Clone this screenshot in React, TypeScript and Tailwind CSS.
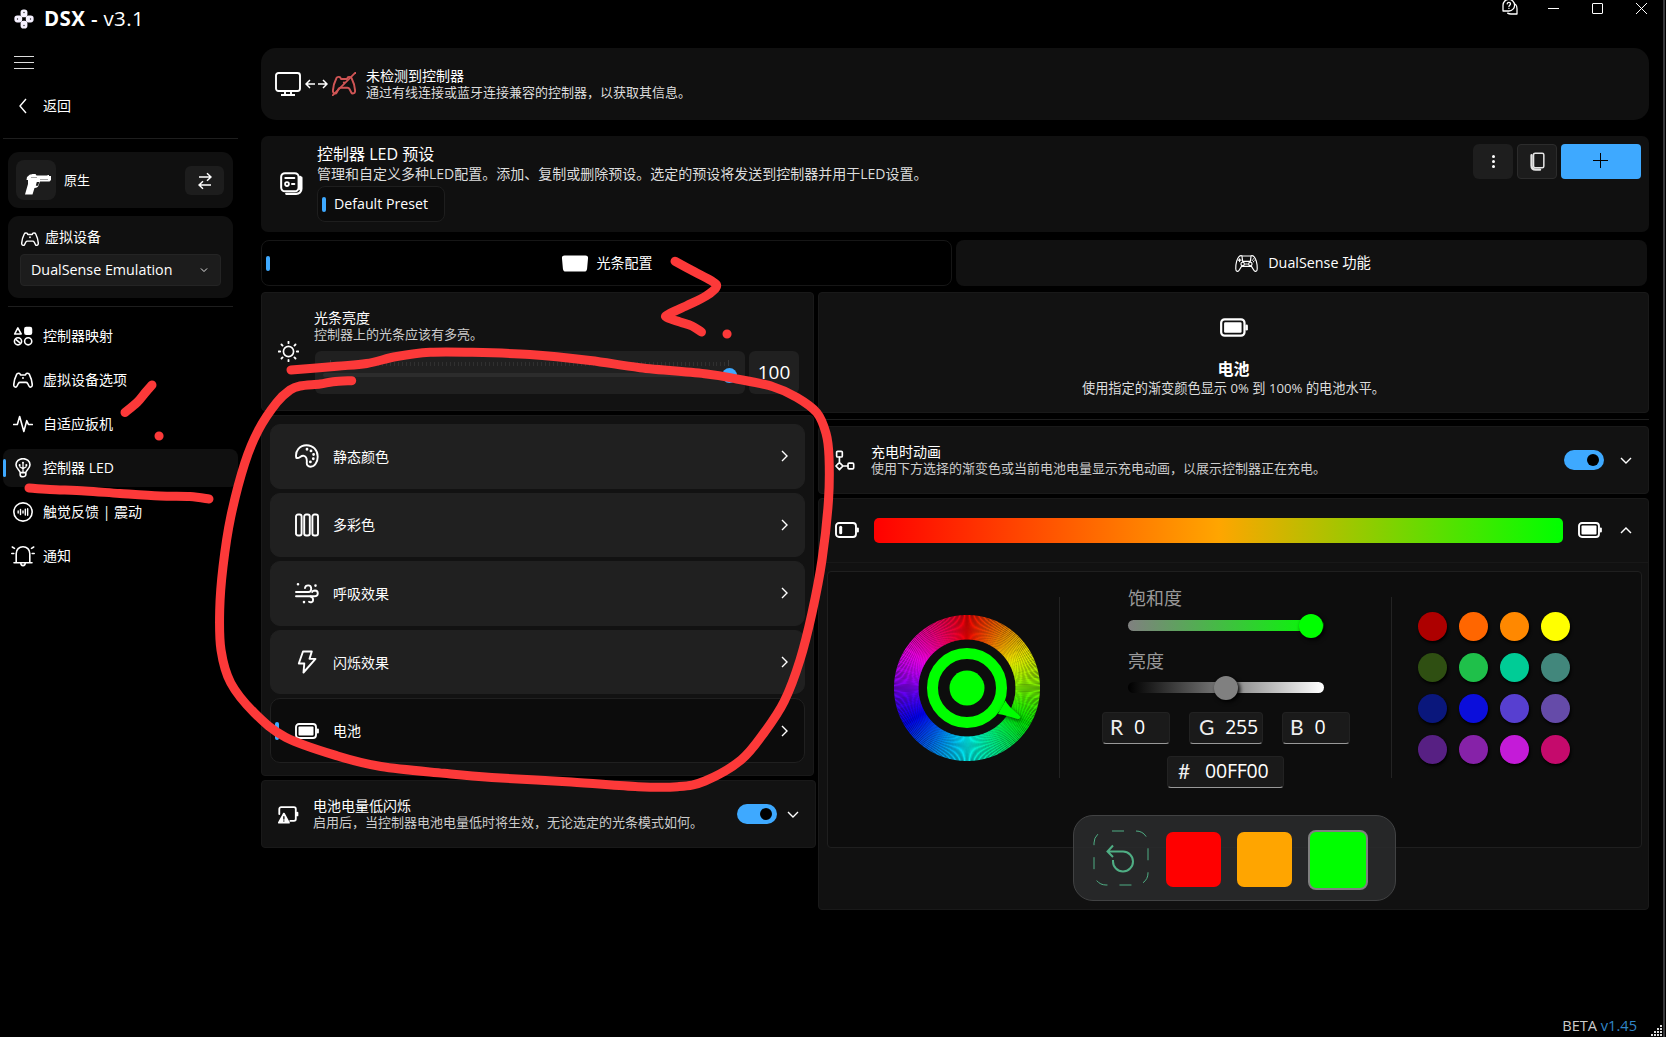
import React from "react";

const navItems = [
  { label: "控制器映射", icon: "mapping" },
  { label: "虚拟设备选项", icon: "pad" },
  { label: "自适应扳机", icon: "pulse" },
  { label: "控制器 LED", icon: "bulb", active: true },
  { label: "触觉反馈 | 震动", icon: "haptic" },
  { label: "通知", icon: "bell" },
];

const modes = [
  { label: "静态颜色", icon: "palette" },
  { label: "多彩色", icon: "bars" },
  { label: "呼吸效果", icon: "wind" },
  { label: "闪烁效果", icon: "bolt" },
  { label: "电池", icon: "battery", active: true },
];

const swatches = [
  "#ad0000", "#ff6600", "#ff8800", "#ffff00",
  "#2f4f12", "#1fc04a", "#00cc96", "#42877c",
  "#0a177c", "#0b0edb", "#573fd0", "#654ba9",
  "#572083", "#8622a8", "#c41bd8", "#c50a6c",
];

function Icon({ name, className }: { name: string; className?: string }) {
  const box = name === "battery" || name === "batteryLow" ? "0 0 24 16" : "0 0 24 24";
  return (
    <svg viewBox={box} className={className} fill="none" stroke="currentColor" strokeWidth="1.9" strokeLinecap="round" strokeLinejoin="round">
      {name === "mapping" && (
        <>
          <path d="M5.800 2.200 2 9.600h7.800z" />
          <rect x="13.300" y="1" width="9.800" height="9.800" rx="2.600" fill="currentColor" stroke="none" />
          <circle cx="6" cy="18.300" r="4.300" />
          <circle cx="18.200" cy="18.300" r="4.300" />
          <path d="m3.600 16.300 4.800 4" />
        </>
      )}
      {name === "pad" && (
        <>
          <path d="M4.500 5C5 3.600 8 3.600 8.500 4.800L9 6h6l.5-1.200C16 3.600 19 3.600 19.500 5c2 4 3.500 9 3.600 13-.1 3-3.100 3-3.800 1.500L17.500 16c-.5-1-1-1.200-2-1.200h-7c-1 0-1.500.2-2 1.200l-1.800 3.500C4 21 1 21 .9 18 1 14 2.500 9 4.500 5z" />
          <path d="M12 9.600v.1" strokeWidth="2.300" />
        </>
      )}
      {name === "pulse" && <path d="M.8 12.500h4.400L8 3l5 18 3.500-13 2 4.500h4.700" />}
      {name === "bulb" && (
        <>
          <path d="M8.600 17.500c0-3-5-4.500-5-9.500a8.400 7.200 0 0 1 16.800 0c0 5-5 6.500-5 9.500zM8.600 17.500v2.200c0 3.800 6.800 3.800 6.800 0v-2.200" />
          <path d="M12 17V7.500M12 13 8.200 10.500M12 13l3.800-2.500" strokeWidth="1.500" />
          <path d="M8 8.500v.2M12 5.800v.2M16 8.500v.2" strokeWidth="2.400" />
        </>
      )}
      {name === "haptic" && (
        <>
          <circle cx="12" cy="12" r="11" />
          <path d="M6.200 10.800v2.400M9 9v6M12 10.800v2.400M14.800 8.500v7M17.600 8v8" strokeWidth="1.700" />
        </>
      )}
      {name === "bell" && (
        <>
          <path d="M5.200 18.500V9.500c0-4 2.900-6.800 6.800-6.800s6.800 2.800 6.800 6.800v9M3 18.700h18" strokeWidth="1.600" />
          <path d="M9.800 19c0 3.500 4.400 3.500 4.400 0M.8 9.500h2M21.200 9.500h2M1.300 3l2.200 1.400M22.700 3l-2.200 1.400" strokeWidth="1.600" />
        </>
      )}
      {name === "palette" && (
        <>
          <path d="M1.300 13.800C-.2 6.500 5 1.200 11.500 1.200c6.500 0 11.200 4.800 11.200 11.500 0 5.600-3.200 10-7 10-3 0-4.200-1.800-3.900-4.600.2-3-.2-5.600-2.900-6.300-3.400-.8-4.300 3.300-7.600 2z" />
          <path d="M12 5.200v.1M16 6.800v.1M18.600 10.500v.1M18.300 14.700v.1M15.400 17.800v.1" strokeWidth="2.800" />
        </>
      )}
      {name === "bars" && (
        <>
          <rect x="1" y="1.500" width="5.600" height="21" rx="2" />
          <rect x="9.200" y="1.500" width="5.600" height="21" rx="2" />
          <rect x="17.400" y="1.500" width="5.600" height="21" rx="2" />
        </>
      )}
      {name === "wind" && (
        <>
          <path d="M1 11h12.500c3.500 0 3.800-6.600-.3-6.600-2 0-3 1-3.200 2.600" />
          <path d="M1 15.300h18.500c4.300 0 4.300-5.600.4-5.800-1.600 0-2.400.6-2.700 1.600" />
          <path d="M14 20.700c1.700 1.200 4.100.4 4.100-1.800 0-1.400-.6-3-2.600-3.400" />
          <path d="M3 3.200v.1M20.500 4.500v.1M9 21v.1" strokeWidth="2.600" />
        </>
      )}
      {name === "bolt" && <path d="M8 1.500h8.800l-2.300 7.400h6L8.500 22.500l.8-9H3.800z" />}
      {name === "battery" && (
        <>
          <rect x="1" y="1" width="20" height="14" rx="3" strokeWidth="1.900" />
          <rect x="3.500" y="3.500" width="15" height="9" rx="1" fill="currentColor" stroke="none" />
          <path d="M22.800 6.500v3" strokeWidth="2.200" />
        </>
      )}
      {name === "batteryLow" && (
        <>
          <rect x="1" y="1" width="20" height="14" rx="3" strokeWidth="1.900" />
          <path d="M5.700 5.200v5.600" strokeWidth="3" />
          <path d="M22.800 6.500v3" strokeWidth="2.200" />
        </>
      )}
      {name === "warn" && (
        <>
          <path d="M2.500 12V6.500a2 2 0 0 1 2-2h14a2 2 0 0 1 2 2v11a2 2 0 0 1-2 2h-4M22.300 10.500v3" strokeWidth="2" />
          <path d="M7.500 11.500 2 21.500h11z" fill="currentColor" />
          <path d="M7.500 15v2.500M7.500 19.600v.1" stroke="#111" strokeWidth="1.500" />
        </>
      )}
      {name === "node" && (
        <>
          <rect x="3" y="1.500" width="6.500" height="6.500" rx="1.200" />
          <rect x="16" y="15" width="6.500" height="6.500" rx="1.200" />
          <path d="M6.200 8v6.200M10.200 18.300H16M6.200 14.200l4 4.100-4 4.100-4-4.100z" />
        </>
      )}
      {name === "sun" && (
        <>
          <circle cx="12" cy="12" r="5.800" />
          <path d="M12 .8v1.700M12 21.500v1.700M.8 12h1.700M21.500 12h1.700M4 4l1.200 1.200M18.800 18.800 20 20M4 20l1.200-1.200M18.800 5.200 20 4" strokeWidth="2.100" />
        </>
      )}
      {name === "preset" && (
        <>
          <rect x="1.200" y="1.200" width="18.200" height="19" rx="4" strokeWidth="2.100" />
          <path d="M5.500 6.200h9.500M12.500 12.500h2.500" strokeWidth="2" />
          <circle cx="7.300" cy="12.600" r="2" />
          <path d="M22.300 6v11.500c0 3.300-2.300 5.300-5.500 5.300H6.500M21 5v13" strokeWidth="2.400" />
        </>
      )}
      {name === "copy" && (
        <>
          <rect x="7" y="1.500" width="13" height="18.500" rx="2" />
          <path d="M4.500 4v13c0 3.500 2 5.200 5.200 5.200h5.500" strokeWidth="3" />
        </>
      )}
      {name === "chat" && (
        <>
          <path d="M1.500 17.500V9.500a8.700 8.700 0 1 1 9 8.500H1.500z" />
          <path d="M8.500 21.200c1.500 1 3 1.300 5 1.300h9v-8c0-3-.8-5-2.200-6.500" />
          <path d="M7.800 7.200c.3-3 5-2.800 5 .1 0 1.900-2.400 2-2.400 4M10.400 14v.1" />
        </>
      )}
      {name === "dualsense" && (
        <g strokeWidth="1.200">
          <path d="M4.200 4.800C5 4 7 3.800 8 4.200h8c1-.4 3-.2 3.800.6 2 2 3.400 8.200 3.400 12.700 0 3.500-2.700 3.300-3.700 1.300L17.200 15H6.800l-2.300 3.800c-1 2-3.700 2.200-3.700-1.300 0-4.500 1.400-10.700 3.400-12.700z" />
          <path d="M7.300 4.500 8 9.800h8l.7-5.300" />
          <circle cx="8" cy="12.500" r="1.800" />
          <circle cx="16" cy="12.500" r="1.800" />
          <path d="M4.800 7v3M3.300 8.500h3M18 8.500h.1M20.800 8.500h.1M19.400 7v.1M19.400 10v.1M11 12.500h2" />
        </g>
      )}
    </svg>
  );
}

function Chevron({ dir, className }: { dir: "left" | "right" | "down" | "up"; className?: string }) {
  const d = {
    left: "M8 1 2 8l6 7",
    right: "M2 3l5 5-5 5",
    down: "M1 4l5 5 5-5",
    up: "M1 9l5-5 5 5",
  }[dir];
  return (
    <svg viewBox={dir === "left" || dir === "right" ? "0 0 9 16" : "0 0 12 13"} className={className} fill="none" stroke="currentColor" strokeWidth="1.400">
      <path d={d} />
    </svg>
  );
}

function Toggle() {
  return (
    <div className="flex h-5 w-10 items-center justify-end rounded-full bg-[#3ea9ff] pr-[5px]">
      <div className="h-3 w-3 rounded-full bg-black" />
    </div>
  );
}

function Sidebar() {
  return (
    <aside className="flex w-[261px] shrink-0 flex-col text-sm">
      <div className="flex h-[38px] items-center pl-[14px]">
        <svg viewBox="0 0 20 20" className="h-5 w-5" fill="#f5f0ff">
          <rect x="6.600" y=".4" width="6.800" height="7.800" rx="2.800" />
          <rect x="6.600" y="11.800" width="6.800" height="7.800" rx="2.800" />
          <rect x=".4" y="6.600" width="7.800" height="6.800" rx="2.800" />
          <rect x="11.800" y="6.600" width="7.800" height="6.800" rx="2.800" />
          <g fill="#222">
            <circle cx="10" cy="3.500" r=".7" />
            <circle cx="10" cy="16.500" r=".7" />
            <circle cx="3.500" cy="10" r=".7" />
            <circle cx="16.500" cy="10" r=".7" />
          </g>
        </svg>
        <p className="ml-[10px] text-[20.500px] font-semibold tracking-[0.35px]">
          <span className="font-bold">DSX</span> - <span className="font-medium">v3.1</span>
        </p>
      </div>
      <div className="mt-[18px] ml-[14px] flex w-5 flex-col gap-[5px]">
        <div className="h-px bg-[#ddd]" />
        <div className="h-px bg-[#ddd]" />
        <div className="h-px bg-[#ddd]" />
      </div>
      <div className="mt-[27px] flex h-5 items-center pl-[18px]">
        <Chevron dir="left" className="h-4 w-[9px]" />
        <span className="ml-4">返回</span>
      </div>
      <div className="mt-[22px] ml-[3px] h-px w-[235px] bg-[#1e1e1e]" />
      <div className="mt-[13px] ml-2 flex h-14 w-[225px] items-center rounded-[11px] bg-[#101010] pr-[9px] pl-2">
        <div className="flex h-10 w-10 items-center justify-center rounded-lg bg-[#1d1d1d]">
          <svg viewBox="0 0 28 22" className="mt-2 ml-1 h-[22px] w-7" fill="#fff">
            <path d="M3 4 6 1.500h1L8.500 1h3l1 1.500h11V2h1.500v1h2v4l-1.500 1.500H16l-1.500 4c-.5 1.500-1.500 2.500-4 2.500l-2 6.500H1L4 11V7H2.500z" />
            <path d="M12.800 9h2.600l-1.400 3.700h-2.200z" fill="#1d1d1d" />
            <path d="M7 4.200h6v.9H7zM16 6h8v.8h-8z" fill="#888" />
          </svg>
        </div>
        <span className="ml-2 flex-1 text-[13px]">原生</span>
        <div className="flex h-[29px] w-[39px] items-center justify-center rounded-md bg-[#1d1d1d]">
          <svg viewBox="0 0 14 18" className="mt-px h-[18px] w-[14px]" fill="none" stroke="#fff" strokeWidth="1.500">
            <path d="M1 5h12M9 1.200 13 5 9 8.800M13 13H1M5 9.200 1 13l4 3.800" />
          </svg>
        </div>
      </div>
      <div className="mt-2 ml-2 h-[82px] w-[225px] rounded-[11px] bg-[#101010] px-3 pt-3">
        <div className="flex h-[18px] items-center">
          <Icon name="pad" className="mt-1 ml-px h-[18px] w-[18px]" />
          <span className="ml-[6px]">虚拟设备</span>
        </div>
        <div className="mt-2 flex h-8 w-[201px] items-center justify-between rounded-[4px] border border-[#242424] bg-[#1c1c1c] pr-3 pl-[10px]">
          <span className="text-[14.300px]">DualSense Emulation</span>
          <Chevron dir="down" className="h-2 w-2 text-white" />
        </div>
      </div>
      <div className="mt-2 ml-2 h-px w-[225px] bg-[#1e1e1e]" />
      <nav className="mt-[10px] ml-[3px] flex w-[235px] flex-col gap-[6px]">
        {navItems.map((item) => (
          <div key={item.icon} className={item.active ? "flex h-[38px] items-center rounded-lg bg-[#101010]" : "flex h-[38px] items-center"}>
            <div className={item.active ? "h-[18px] w-[3px] rounded bg-[#3ea9ff]" : "w-[3px]"} />
            <div className="flex w-[34px] justify-center">
              <Icon name={item.icon} className={item.icon === "bell" ? "h-6 w-6" : "h-5 w-5"} />
            </div>
            <span className="ml-[3px]">{item.label}</span>
          </div>
        ))}
      </nav>
    </aside>
  );
}

function ColorWheel() {
  const lines = Array.from({ length: 360 }, (_, i) => {
    const a = ((i - 90) * Math.PI) / 180;
    return { i, c: Math.cos(a), s: Math.sin(a) };
  });
  return (
    <svg viewBox="-80 -80 160 160" className="h-40 w-40">
      {lines.map(({ i, c, s }) => (
        <line key={i} x1={c * 48.5} y1={s * 48.5} x2={c * 73} y2={s * 73} stroke={`hsl(${i} 100% 47%)`} strokeWidth="1.100" />
      ))}
      <circle r="34.500" fill="none" stroke="#00ff00" strokeWidth="11" />
      <circle r="17.500" fill="#00ff00" />
      <path
        d="M38.500 12.500c3 6 8 9.500 13.500 14.500 2.500 2.500.5 4.500-2.500 3.800C43 29 37 26.500 31 26z"
        fill="#00ff00"
        className="drop-shadow-[1px_2px_2px_rgba(0,0,0,0.6)]"
      />
    </svg>
  );
}

function ValueBox({ name, value, className }: { name: string; value: string; className: string }) {
  return (
    <div className={"flex h-8 items-center rounded-[4px] border border-[#222] border-b-[#999] bg-[#1a1a1a] pb-[3px] text-[19.500px] leading-none tracking-[-0.2px] " + className}>
      <span className="font-['Lato'] text-[21px] text-[#eee]">{name}</span>
      <span>{value}</span>
    </div>
  );
}

function LeftColumn() {
  return (
    <div className="flex w-[555px] shrink-0 flex-col">
      <section className="flex h-[119px] w-[553px] rounded-[4px] border border-[#191919] bg-[#121212]">
        <Icon name="sun" className="mt-12 ml-4 h-[21px] w-[21px]" />
        <div className="ml-[15px] pt-4">
          <h3 className="text-sm leading-[17px]">光条亮度</h3>
          <p className="text-[13px] leading-[17px] text-[#ccc]">控制器上的光条应该有多亮。</p>
          <div className="mt-2 ml-px flex gap-1">
            <div className="h-[43px] w-[430px] rounded-md bg-[#202020] px-2 pt-[9px]">
              <div className="flex h-1.5 items-end justify-between px-[7px]">
                {Array.from({ length: 101 }, (_, i) => (
                  <div key={i} className={i === 0 || i === 100 ? "h-1.5 w-px bg-[#3a3a3a]" : "h-1 w-px bg-[#303030]"} />
                ))}
              </div>
              <div className="mt-[7px] flex h-1 items-center justify-end rounded-full bg-[#2c2c2c]">
                <div className="h-[15px] w-[15px] rounded-full bg-[#3ea9ff]" />
              </div>
            </div>
            <div className="flex h-[43px] w-[50px] items-center justify-center rounded-md bg-[#202020] text-[19px]">100</div>
          </div>
        </div>
      </section>
      <section className="mt-1 flex h-[361px] w-[553px] flex-col gap-1 rounded-[4px] border border-[#191919] bg-[#121212] px-2 pt-2">
        {modes.map((m) => (
          <div
            key={m.icon}
            className={
              m.active
                ? "flex h-[64.600px] items-center rounded-[10px] border border-[#202020] bg-[#0c0c0c] pr-[15px]"
                : "flex h-[64.600px] items-center rounded-[10px] border border-[#202020] bg-[#202020] pr-[15px]"
            }
          >
            <div className={m.active ? "ml-1 h-[18px] w-1 rounded bg-[#3ea9ff]" : "ml-1 w-1"} />
            <Icon name={m.icon} className="ml-4 h-6 w-6" />
            <span className="ml-[14px] flex-1 pt-px text-sm">{m.label}</span>
            <Chevron dir="right" className="h-4 w-[9px]" />
          </div>
        ))}
      </section>
      <section className="mt-1 flex h-[68px] items-center rounded-[4px] border border-[#191919] bg-[#121212] pr-4 pl-[15px]">
        <Icon name="warn" className="h-[22px] w-[22px]" />
        <div className="ml-[14px] flex-1">
          <h3 className="text-sm leading-[17px]">电池电量低闪烁</h3>
          <p className="text-[13px] leading-[17px] text-[#ccc]">启用后，当控制器电池电量低时将生效，无论选定的光条模式如何。</p>
        </div>
        <Toggle />
        <Chevron dir="down" className="ml-[10px] h-[13px] w-3" />
      </section>
    </div>
  );
}

function RightColumn() {
  return (
    <div className="ml-[2px] flex w-[831px] shrink-0 flex-col">
      <section className="flex h-[121px] flex-col items-center rounded-[4px] border border-[#191919] bg-[#121212]">
        <Icon name="battery" className="mt-[25px] h-[19px] w-[28px]" />
        <h2 className="mt-[22px] text-base leading-5 font-bold">电池</h2>
        <p className="text-[13.200px] leading-[18px] text-[#ddd]">使用指定的渐变颜色显示 0% 到 100% 的电池水平。</p>
      </section>
      <div className="mt-1.5 h-px bg-[#1e1e1e]" />
      <section className="mt-1.5 flex h-[68px] items-center rounded-[4px] border border-[#191919] bg-[#121212] pr-4 pl-[15px]">
        <Icon name="node" className="h-[21px] w-[21px]" />
        <div className="ml-4 flex-1">
          <h3 className="text-sm leading-[17px]">充电时动画</h3>
          <p className="text-[13px] leading-[17px] text-[#ccc]">使用下方选择的渐变色或当前电池电量显示充电动画，以展示控制器正在充电。</p>
        </div>
        <Toggle />
        <Chevron dir="down" className="ml-4 h-[13px] w-3" />
      </section>
      <section className="relative mt-1 h-[412px] rounded-[4px] border border-[#191919] bg-[#111]">
        <div className="flex h-16 items-center border-b border-[#181818] pr-4 pb-px pl-4">
          <Icon name="batteryLow" className="h-4 w-6" />
          <div className="ml-[15px] h-[25px] w-[690px] rounded-[5px] bg-[linear-gradient(90deg,#ff0000,#ffa500_50%,#00ff00)]" />
          <Icon name="battery" className="ml-[15px] h-4 w-6" />
          <Chevron dir="up" className="ml-[18px] h-[13px] w-3" />
        </div>
        <div className="mx-2 mt-2 flex h-[277px] w-[815px] rounded-[4px] border border-[#1f1f1f] bg-[#0d0d0d]">
          <div className="mt-[36px] ml-[59px]">
            <ColorWheel />
          </div>
          <div className="mt-[25px] ml-[12px] h-[181px] w-px bg-[#232323]" />
          <div className="mt-[15px] ml-[42px] flex w-[248px] flex-col items-center">
            <div className="w-[196px] text-lg leading-[22px] text-[#999]">饱和度</div>
            <div className="mt-[11px] flex h-[11px] w-[196px] items-center justify-end rounded-full bg-[linear-gradient(90deg,#808080,#00ff00)]">
              <div className="mr-px h-6 w-6 shrink-0 rounded-full bg-[#00ff00] shadow-[2px_2px_4px_#000]" />
            </div>
            <div className="mt-[19px] w-[196px] text-lg leading-[22px] text-[#999]">亮度</div>
            <div className="mt-[10px] flex h-[11px] w-[196px] items-center justify-center rounded-full bg-[linear-gradient(90deg,#000,#fff)]">
              <div className="h-6 w-6 shrink-0 rounded-full bg-[#808080] shadow-[2px_2px_4px_#000]" />
            </div>
            <div className="mt-[19px] flex w-[248px] justify-between">
              <ValueBox name="R" value="0" className="w-[68px] gap-[11px] pl-[7px]" />
              <ValueBox name="G" value="255" className="w-[74px] gap-[11px] pl-[9px]" />
              <ValueBox name="B" value="0" className="w-[68px] gap-[11px] pl-[7px]" />
            </div>
            <ValueBox name="#" value="00FF00" className="mt-3 mr-px w-[117px] gap-[15px] pl-[10px]" />
          </div>
          <div className="mt-[25px] ml-[41px] h-[181px] w-px bg-[#232323]" />
          <div className="mt-[40px] ml-[26px] grid h-[152px] grid-cols-4 gap-3">
            {swatches.map((c) => (
              <div key={c} className="h-[29px] w-[29px] rounded-full shadow-[1px_2px_3px_#000]" style={{ backgroundColor: c }} />
            ))}
          </div>
        </div>
        <div className="absolute top-[316px] left-[254px] flex h-[86px] w-[323px] items-center rounded-[20px] border border-[#414243] bg-[#292a2be6] pl-[19px]">
          <svg viewBox="0 0 56 56" className="h-14 w-14" fill="none" stroke="#4fae84">
            <rect x="1" y="1" width="54" height="54" rx="12" strokeDasharray="12 12" strokeDashoffset="-6" />
            <path d="M20 15.500 14.500 21.500 20 27M15 21.500h15a10 10 0 1 1-10 10v-1.500" strokeWidth="2" />
          </svg>
          <div className="mt-0.5 ml-[17px] h-[55px] w-[55px] rounded-[7px] bg-[#ff0000]" />
          <div className="mt-0.5 ml-4 h-[55px] w-[55px] rounded-[7px] bg-[#ffa500]" />
          <div className="mt-[3px] ml-4 h-[60px] w-[60px] rounded-[8px] border-2 border-[#808080] bg-[#00ff00]" />
        </div>
      </section>
    </div>
  );
}

// turns a list of points into a smooth hand-drawn line
function smooth(points: number[][]) {
  let d = `M${points[0][0]} ${points[0][1]}`;
  for (let i = 0; i < points.length - 1; i++) {
    const p0 = points[i - 1] ?? points[i];
    const p1 = points[i];
    const p2 = points[i + 1];
    const p3 = points[i + 2] ?? p2;
    d += `C${p1[0] + (p2[0] - p0[0]) / 6} ${p1[1] + (p2[1] - p0[1]) / 6} ${p2[0] - (p3[0] - p1[0]) / 6} ${p2[1] - (p3[1] - p1[1]) / 6} ${p2[0]} ${p2[1]}`;
  }
  return d;
}

const strokes = [
  [[29, 488], [50, 489.5], [85, 491], [120, 493.500], [160, 496], [190, 496.500], [209, 499]],
  [[152, 385], [145, 393], [137, 402.500], [125, 412.500]],
  [[675, 261.300], [694, 271.500], [711, 280.500], [716.500, 286.500], [706, 296], [687, 305.500], [668, 314.500], [667, 317.500], [680, 322], [692, 326], [701.500, 332]],
  [
    [291, 370], [336.700, 366.200], [366.700, 363.500], [396.700, 356.500], [430, 352.300], [470, 352.300], [530, 354.500], [590, 360.500],
    [640, 367.700], [706.700, 374], [736.700, 379], [773, 386.700], [796.700, 397.300], [816.700, 412.500], [826, 433.300], [829, 456.700],
    [828.500, 500], [822, 560], [812, 613], [800, 660], [784.400, 701], [764.600, 732], [741, 760], [705, 781], [677.600, 786.700], [638, 786.700],
    [571, 782], [491.800, 777.500], [444, 773.300], [381, 766.500], [337.600, 756], [286, 737.500], [254.500, 713], [230.800, 683], [221, 650], [219.700, 610],
    [223, 566.700], [230.800, 516.700], [244.700, 463.300], [258.500, 430], [276.700, 402.500], [290, 390], [300, 386], [320, 384], [333, 381.700], [351.700, 380.700],
  ],
];

function PenMarks() {
  return (
    <svg viewBox="0 0 1666 1037" className="pointer-events-none absolute inset-0 h-full w-full" fill="none" stroke="#fc3939" strokeWidth="9" strokeLinecap="round" strokeLinejoin="round">
      {strokes.map((s, i) => (
        <path key={i} d={smooth(s)} />
      ))}
      <path d="M159 436h.1M727 334h.1" />
    </svg>
  );
}

export default function App() {
  return (
    <div className="relative flex h-[1037px] w-[1666px] overflow-hidden bg-black font-['Open_Sans','Noto_Sans_CJK_SC',sans-serif] whitespace-nowrap text-white">
      <Sidebar />
      <main className="flex w-[1402px] shrink-0 flex-col">
        <div className="flex h-12 items-start justify-end pr-4">
          <Icon name="chat" className="-mt-px h-4 w-4" />
          <svg viewBox="0 0 11 11" className="mt-[3px] ml-[30px] h-[11px] w-[11px]" stroke="#fff">
            <path d="M0 5.500h11" />
          </svg>
          <div className="mt-[3px] ml-[33px] h-[11px] w-[11px] rounded-[1px] border border-white" />
          <svg viewBox="0 0 11 11" className="mt-[3px] ml-[33px] h-[11px] w-[11px]" stroke="#fff">
            <path d="M0 0l11 11M11 0 0 11" />
          </svg>
        </div>
        <section className="flex h-[72px] w-[1388px] shrink-0 items-center rounded-[15px] bg-[#101010] pl-[14px]">
          <svg viewBox="0 0 26 24" className="h-6 w-[26px]" fill="none" stroke="#fff" strokeWidth="1.900">
            <rect x="1" y="1" width="24" height="18" rx="2.500" />
            <path d="M10 19v3.500M16 19v3.500M6 23h14" />
          </svg>
          <svg viewBox="0 0 23 10" className="ml-1 h-[10px] w-[23px]" fill="none" stroke="#fff" strokeWidth="1.500">
            <path d="M1 5h9M13 5h9M5 1 1 5l4 4M18 1l4 4-4 4" />
          </svg>
          <div className="relative ml-1 h-6 w-6 text-[#d05555]">
            <Icon name="pad" className="mt-px h-6 w-6" />
            <svg viewBox="0 0 24 24" className="absolute inset-0 h-6 w-6" stroke="currentColor" strokeWidth="1.800">
              <path d="M0 24 24 0" />
            </svg>
          </div>
          <div className="ml-[10px]">
            <h3 className="text-sm leading-[17px]">未检测到控制器</h3>
            <p className="text-[13px] leading-[17px] text-[#ddd]">通过有线连接或蓝牙连接兼容的控制器，以获取其信息。</p>
          </div>
        </section>
        <section className="mt-4 flex h-24 w-[1388px] shrink-0 rounded-[7px] bg-[#101010]">
          <Icon name="preset" className="mt-9 ml-[19px] h-[23px] w-[23px]" />
          <div className="ml-[14px] flex-1 pt-2">
            <h3 className="text-base leading-5">控制器 LED 预设</h3>
            <p className="pt-px text-[14px] leading-[18px] text-[#ddd]">管理和自定义多种LED配置。添加、复制或删除预设。选定的预设将发送到控制器并用于LED设置。</p>
            <div className="mt-[3px] flex h-[36px] w-[128px] items-center rounded-lg border border-[#1e1e1e] bg-[#0c0c0c]">
              <div className="ml-1 h-[15px] w-1 rounded bg-[#3ea9ff]" />
              <span className="ml-2 text-[14.200px]">Default Preset</span>
            </div>
          </div>
          <div className="mt-2 mr-2 flex h-[35px] gap-1">
            <div className="flex w-10 flex-col items-center justify-center gap-[2px] rounded-md bg-[#1e1e1e]">
              <div className="h-[3px] w-[3px] rounded-full bg-white" />
              <div className="h-[3px] w-[3px] rounded-full bg-white" />
              <div className="h-[3px] w-[3px] rounded-full bg-white" />
            </div>
            <div className="flex w-10 items-center justify-center rounded-[4px] border border-[#2c2c2c] bg-[#1c1c1c]">
              <Icon name="copy" className="-mt-px h-[19px] w-[19px] text-[#e5e5e5]" />
            </div>
            <div className="flex w-20 items-center justify-center rounded-[4px] bg-[#3ea9ff]">
              <svg viewBox="0 0 15 15" className="-mt-[3px] mr-px h-[15px] w-[15px]" stroke="#000">
                <path d="M0 7.500h15M7.500 0v15" />
              </svg>
            </div>
          </div>
        </section>
        <div className="mt-2 flex h-[46px] shrink-0 gap-1 text-sm">
          <div className="flex w-[691px] items-center rounded-[8px] border border-[#161616] pl-[4px]">
            <div className="h-[15px] w-1 rounded bg-[#3ea9ff]" />
            <div className="flex flex-1 items-center justify-center pr-2">
              <svg viewBox="0 0 28 18" className="h-[17px] w-7" fill="#fff">
                <path d="M3 .5h22c2 0 3 1 2.800 3l-1 11c-.3 2-1.300 3-3 3H4.200c-1.700 0-2.700-1-3-3L.2 3.500C0 1.500 1 .5 3 .5z" />
              </svg>
              <span className="ml-2">光条配置</span>
            </div>
          </div>
          <div className="flex w-[691px] items-center justify-center rounded-[8px] bg-[#111] pl-[3px]">
            <Icon name="dualsense" className="h-[23px] w-[23px]" />
            <span className="ml-[10px] text-[14.300px]">DualSense 功能</span>
          </div>
        </div>
        <div className="mt-1.5 flex shrink-0">
          <LeftColumn />
          <RightColumn />
        </div>
        <div className="mt-auto flex h-[22px] w-[1402px] items-center justify-end text-[14.600px] text-[#ccc]">
          <span>
            BETA <span className="text-[#3186c8]">v1.45</span>
          </span>
          <svg viewBox="0 0 12 12" className="mt-[9px] ml-[14px] h-3 w-3" fill="#ddd">
            <path d="M9 0h2v2H9zM6 3h2v2H6zM9 3h2v2H9zM3 6h2v2H3zM6 6h2v2H6zM9 6h2v2H9zM0 9h2v2H0zM3 9h2v2H3zM6 9h2v2H6zM9 9h2v2H9z" />
          </svg>
        </div>
      </main>
      <div className="w-0.5 bg-[#37373a]" />
      <PenMarks />
    </div>
  );
}
